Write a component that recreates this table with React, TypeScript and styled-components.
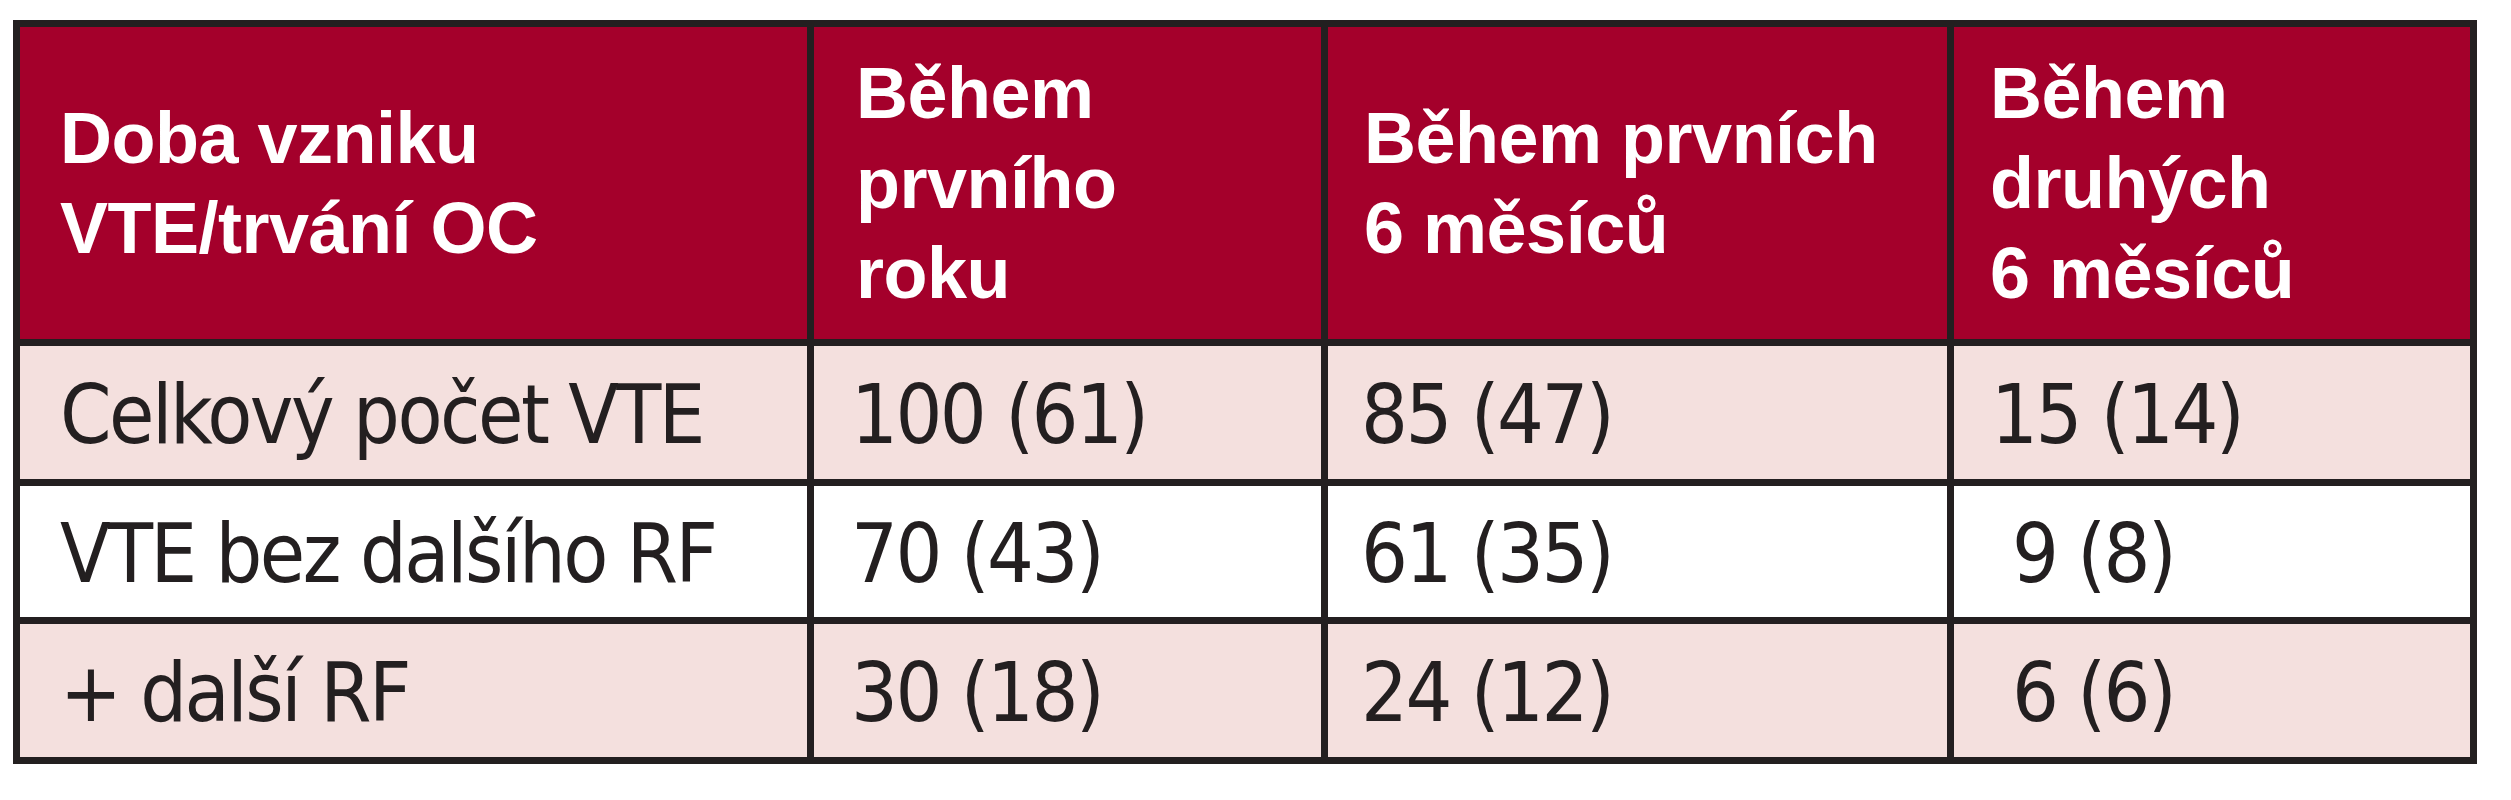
import React from "react";
import styled, { createGlobalStyle } from "styled-components";

const GlobalStyle = createGlobalStyle`
  html, body {
    margin: 0;
    padding: 0;
    background: #ffffff;
  }
`;

const Page = styled.div`
  padding: 20px 0 0 13px;
`;

const Table = styled.div`
  display: grid;
  width: max-content;
  grid-template-columns: 787px 507px 619px 516px;
  grid-template-rows: 312px 133px 131px 133px;
  gap: 7px;
  padding: 7px;
  background: #231f20;
`;

const HeadCell = styled.div<{ $pad?: number }>`
  display: flex;
  align-items: center;
  padding-left: ${(p) => p.$pad ?? 40}px;
  background: #a4002b;
  color: #ffffff;
  font-family: "Liberation Sans", Arial, sans-serif;
  font-weight: 700;
  font-size: 72px;
  line-height: 90px;
  letter-spacing: -0.5px;
`;

const Cell = styled.div<{ $tone: "pink" | "white"; $pad?: number }>`
  display: flex;
  align-items: center;
  padding-left: ${(p) => p.$pad ?? 37}px;
  background: ${(p) => (p.$tone === "pink" ? "#f4e0de" : "#ffffff")};
  color: #231f20;
  font-family: "DejaVu Sans Condensed", "Liberation Sans Narrow", sans-serif;
  font-size: 82px;
  letter-spacing: -2.5px;
  line-height: 1;
  white-space: pre;
  padding-top: 4px;
`;

const headers = [
  { lines: ["Doba vzniku", "VTE/trvání OC"], pad: 40 },
  { lines: ["Během", "prvního", "roku"], pad: 42 },
  { lines: ["Během prvních", "6 měsíců"], pad: 36 },
  { lines: ["Během", "druhých", "6 měsíců"], pad: 36 },
];

const rows: { tone: "pink" | "white"; cells: string[] }[] = [
  { tone: "pink", cells: ["Celkový počet VTE", "100 (61)", "85 (47)", "15 (14)"] },
  { tone: "white", cells: ["VTE bez dalšího RF", "70 (43)", "61 (35)", " 9 (8)"] },
  { tone: "pink", cells: ["+ další RF", "30 (18)", "24 (12)", " 6 (6)"] },
];

const cellPads = [40, 37, 33, 37];

function App() {
  return (
    <>
      <GlobalStyle />
      <Page>
        <Table>
          {headers.map((h, i) => (
            <HeadCell key={i} $pad={h.pad}>
              <div>
                {h.lines.map((l, j) => (
                  <React.Fragment key={j}>
                    {l}
                    {j < h.lines.length - 1 && <br />}
                  </React.Fragment>
                ))}
              </div>
            </HeadCell>
          ))}
          {rows.map((r, ri) =>
            r.cells.map((c, ci) => (
              <Cell key={`${ri}-${ci}`} $tone={r.tone} $pad={cellPads[ci]}>
                {c}
              </Cell>
            ))
          )}
        </Table>
      </Page>
    </>
  );
}

export default App;
